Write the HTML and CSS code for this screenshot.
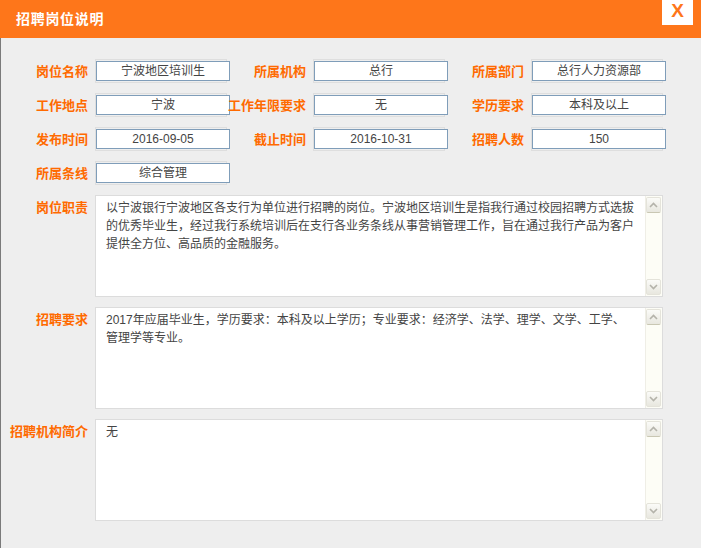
FILE: index.html
```html
<!DOCTYPE html>
<html lang="zh-CN">
<head>
<meta charset="utf-8">
<title>招聘岗位说明</title>
<link rel="stylesheet" href="styles.css">
</head>
<body>
<div class="dialog">
  <div class="header">
    <div class="title">招聘岗位说明</div>
    <div class="close">X</div>
  </div>
  <div class="content">
    <div class="grid">
      <div class="label">岗位名称</div>
      <div class="cell"><div class="field">宁波地区培训生</div></div>
      <div class="label">所属机构</div>
      <div class="cell"><div class="field">总行</div></div>
      <div class="label">所属部门</div>
      <div class="cell"><div class="field">总行人力资源部</div></div>

      <div class="label">工作地点</div>
      <div class="cell"><div class="field">宁波</div></div>
      <div class="label">工作年限要求</div>
      <div class="cell"><div class="field">无</div></div>
      <div class="label">学历要求</div>
      <div class="cell"><div class="field">本科及以上</div></div>

      <div class="label">发布时间</div>
      <div class="cell"><div class="field">2016-09-05</div></div>
      <div class="label">截止时间</div>
      <div class="cell"><div class="field">2016-10-31</div></div>
      <div class="label">招聘人数</div>
      <div class="cell"><div class="field">150</div></div>

      <div class="label">所属条线</div>
      <div class="cell"><div class="field">综合管理</div></div>
    </div>

    <div class="area-row">
      <div class="label top">岗位职责</div>
      <div class="area">
        <div class="area-text">以宁波银行宁波地区各支行为单位进行招聘的岗位。宁波地区培训生是指我行通过校园招聘方式选拔<br>的优秀毕业生，经过我行系统培训后在支行各业务条线从事营销管理工作，旨在通过我行产品为客户<br>提供全方位、高品质的金融服务。</div>
        <div class="scrollbar">
          <div class="sbtn up"><svg width="9" height="6" viewBox="0 0 9 6"><polyline points="1,5 4.5,1.5 8,5" fill="none" stroke="#b4b3aa" stroke-width="1.6"/></svg></div>
          <div class="track"></div>
          <div class="sbtn down"><svg width="9" height="6" viewBox="0 0 9 6"><polyline points="1,1 4.5,4.5 8,1" fill="none" stroke="#b4b3aa" stroke-width="1.6"/></svg></div>
        </div>
      </div>
    </div>

    <div class="area-row">
      <div class="label top">招聘要求</div>
      <div class="area">
        <div class="area-text">2017年应届毕业生，学历要求：本科及以上学历；专业要求：经济学、法学、理学、文学、工学、<br>管理学等专业。</div>
        <div class="scrollbar">
          <div class="sbtn up"><svg width="9" height="6" viewBox="0 0 9 6"><polyline points="1,5 4.5,1.5 8,5" fill="none" stroke="#b4b3aa" stroke-width="1.6"/></svg></div>
          <div class="track"></div>
          <div class="sbtn down"><svg width="9" height="6" viewBox="0 0 9 6"><polyline points="1,1 4.5,4.5 8,1" fill="none" stroke="#b4b3aa" stroke-width="1.6"/></svg></div>
        </div>
      </div>
    </div>

    <div class="area-row">
      <div class="label top">招聘机构简介</div>
      <div class="area">
        <div class="area-text">无</div>
        <div class="scrollbar">
          <div class="sbtn up"><svg width="9" height="6" viewBox="0 0 9 6"><polyline points="1,5 4.5,1.5 8,5" fill="none" stroke="#b4b3aa" stroke-width="1.6"/></svg></div>
          <div class="track"></div>
          <div class="sbtn down"><svg width="9" height="6" viewBox="0 0 9 6"><polyline points="1,1 4.5,4.5 8,1" fill="none" stroke="#b4b3aa" stroke-width="1.6"/></svg></div>
        </div>
      </div>
    </div>
  </div>
</div>
</body>
</html>
```

FILE: styles.css
```css
html, body {
  margin: 0;
  padding: 0;
  background: #eeeeee;
}

body {
  font-family: "Liberation Sans", "Noto Sans CJK SC", sans-serif;
  font-size: 12px;
  color: #444;
}

.dialog {
  width: 701px;
  height: 548px;
  display: flex;
  flex-direction: column;
  overflow: hidden;
}

.header {
  height: 38px;
  flex: 0 0 38px;
  background: #fe761a;
  display: flex;
  justify-content: space-between;
  align-items: flex-start;
}

.title {
  margin: 10px 0 0 16px;
  font-family: "Noto Sans CJK SC", sans-serif;
  font-size: 14px;
  line-height: 16px;
  font-weight: bold;
  letter-spacing: 0.7px;
  color: #ffffff;
}

.close {
  width: 31px;
  height: 25px;
  margin-right: 8px;
  background: #ffffff;
  color: #fe761a;
  font-family: "Liberation Sans", sans-serif;
  font-weight: bold;
  font-size: 19px;
  line-height: 22px;
  text-align: center;
}

.content {
  flex: 1;
  border-left: 1px solid #7a7a7a;
  padding: 21px 0 0 8px;
  display: flex;
  flex-direction: column;
  gap: 10px;
}

.grid {
  display: grid;
  grid-template-columns: 86px 132px 86px 132px 86px 132px;
  grid-auto-rows: 24px;
  row-gap: 10px;
}

.label {
  box-sizing: border-box;
  padding-right: 7px;
  text-align: right;
  white-space: nowrap;
  font-family: "Noto Sans CJK SC", sans-serif;
  font-size: 13px;
  font-weight: bold;
  line-height: 16px;
  color: #ff6a00;
  align-self: center;
}

.label.top {
  align-self: flex-start;
  padding-top: 4px;
}

.cell {
  box-sizing: border-box;
  width: 132px;
  height: 24px;
  border: 1px solid #dedede;
}

.field {
  box-sizing: border-box;
  width: 134px;
  height: 20px;
  margin-top: 1px;
  border: 1px solid #7f9db9;
  background: #ffffff;
  text-align: center;
  line-height: 18px;
  font-size: 12px;
  color: #444;
  white-space: nowrap;
}

.area-row {
  display: grid;
  grid-template-columns: 86px 568px;
}

.area {
  box-sizing: border-box;
  height: 102px;
  border: 1px solid #dcdcdc;
  background: #ffffff;
  display: flex;
}

.area-text {
  flex: 1;
  padding: 3px 6px 0 10px;
  line-height: 18px;
  font-size: 12px;
  color: #444;
  white-space: nowrap;
}

.scrollbar {
  width: 17px;
  flex: 0 0 17px;
  background: #fdfdf6;
  border-left: 1px solid #efeee6;
  box-sizing: border-box;
  display: flex;
  flex-direction: column;
  padding: 1px 0;
}

.track {
  flex: 1;
}

.sbtn {
  box-sizing: border-box;
  height: 16px;
  margin: 0 1px 0 0;
  border: 1px solid #e4e3da;
  border-radius: 2px;
  background: linear-gradient(#fbfbf8, #e8e7df);
  display: flex;
  align-items: center;
  justify-content: center;
}

.sbtn.up {
  border-bottom: 1px solid #c9c7b3;
}
```
